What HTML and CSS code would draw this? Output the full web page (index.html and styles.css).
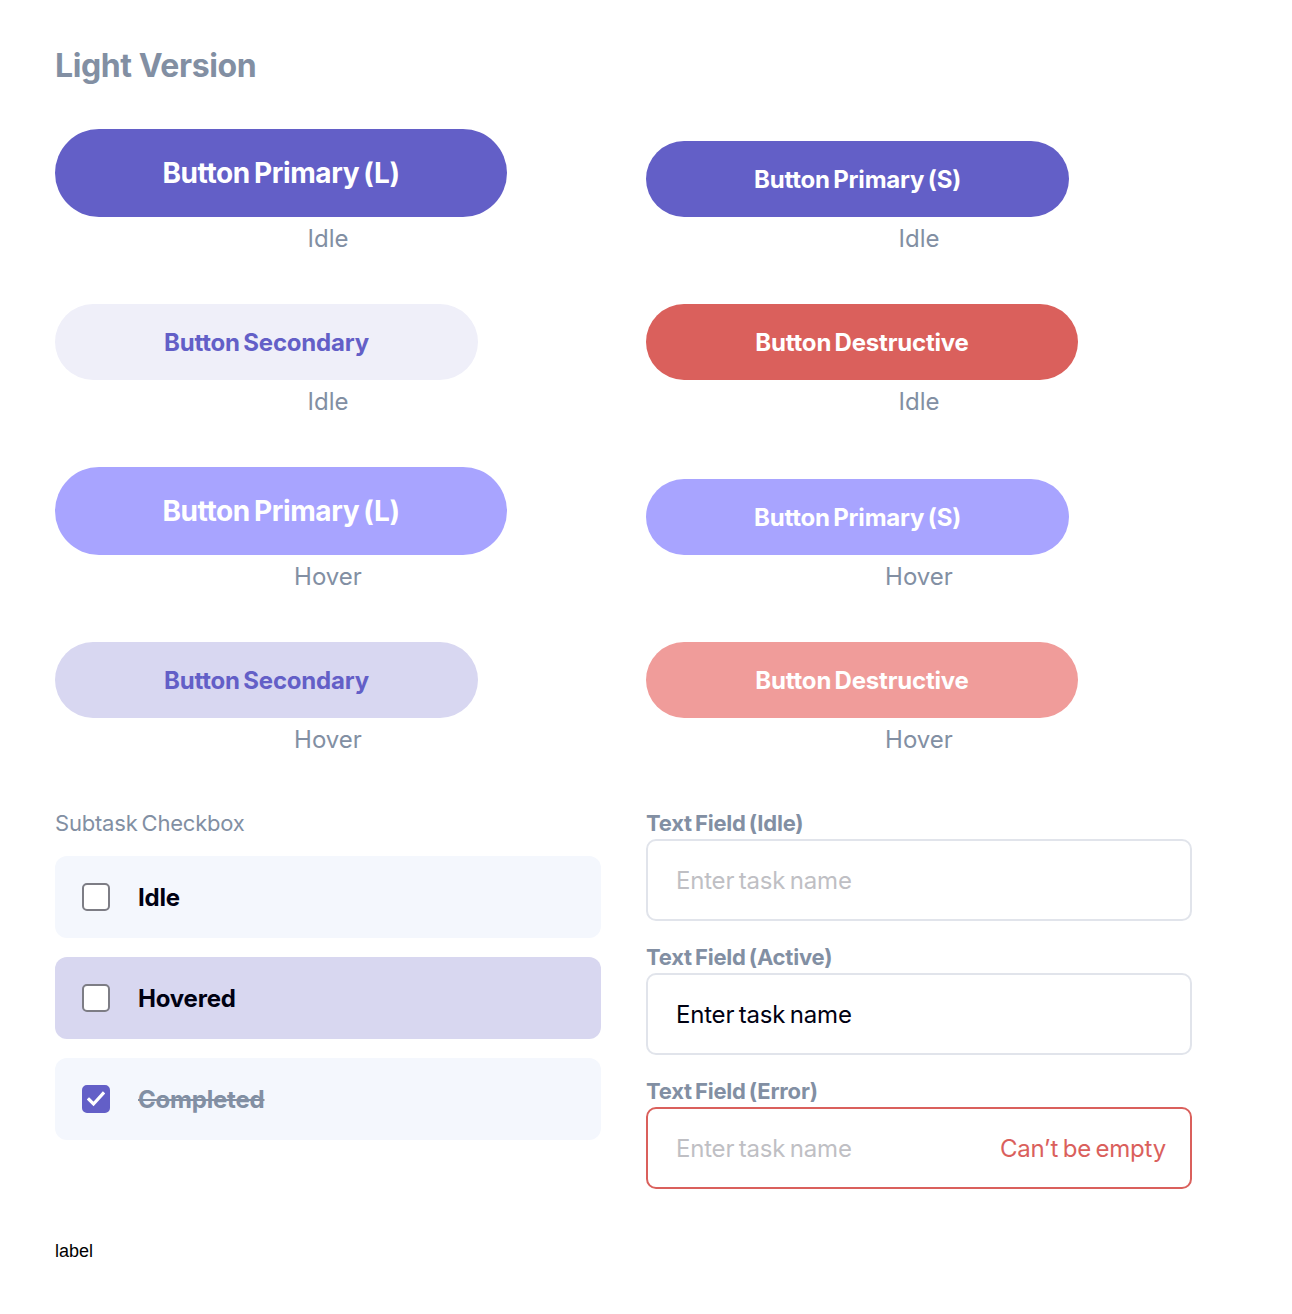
FILE: index.html
```html
<!DOCTYPE html>
<html lang="en">
<head>
<meta charset="utf-8">
<title>Light Version</title>
<link rel="stylesheet" href="styles.css">
</head>
<body>
<main class="page">
  <h1 class="title">Light Version</h1>

  <section class="btn-row">
    <div class="cell">
      <button class="btn btn-lg btn-primary">Button Primary (L)</button>
      <div class="state">Idle</div>
    </div>
    <div class="cell">
      <button class="btn btn-sm btn-primary btn-w423">Button Primary (S)</button>
      <div class="state">Idle</div>
    </div>
  </section>

  <section class="btn-row">
    <div class="cell">
      <button class="btn btn-sm btn-secondary btn-w423">Button Secondary</button>
      <div class="state">Idle</div>
    </div>
    <div class="cell">
      <button class="btn btn-sm btn-destructive btn-w432">Button Destructive</button>
      <div class="state">Idle</div>
    </div>
  </section>

  <section class="btn-row">
    <div class="cell">
      <button class="btn btn-lg btn-primary-hover">Button Primary (L)</button>
      <div class="state">Hover</div>
    </div>
    <div class="cell">
      <button class="btn btn-sm btn-primary-hover btn-w423">Button Primary (S)</button>
      <div class="state">Hover</div>
    </div>
  </section>

  <section class="btn-row">
    <div class="cell">
      <button class="btn btn-sm btn-secondary-hover btn-w423">Button Secondary</button>
      <div class="state">Hover</div>
    </div>
    <div class="cell">
      <button class="btn btn-sm btn-destructive-hover btn-w432">Button Destructive</button>
      <div class="state">Hover</div>
    </div>
  </section>

  <section class="forms">
    <div class="col">
      <div class="section-label">Subtask Checkbox</div>
      <div class="subtasks">
        <div class="subtask">
          <span class="box"></span>
          <span class="subtask-text">Idle</span>
        </div>
        <div class="subtask subtask-hover">
          <span class="box"></span>
          <span class="subtask-text">Hovered</span>
        </div>
        <div class="subtask">
          <span class="box box-checked">
            <svg width="18" height="16" viewBox="0 0 18 16"><path d="M2 8.5 L6.5 13 L16 2.5" fill="none" stroke="#fff" stroke-width="3.2" stroke-linecap="square"/></svg>
          </span>
          <span class="subtask-text subtask-done">Completed</span>
        </div>
      </div>
    </div>
    <div class="col">
      <div class="field-label">Text Field (Idle)</div>
      <div class="field"><span class="placeholder">Enter task name</span></div>
      <div class="field-label">Text Field (Active)</div>
      <div class="field"><span class="value">Enter task name</span></div>
      <div class="field-label">Text Field (Error)</div>
      <div class="field field-error"><span class="placeholder">Enter task name</span><span class="error-msg">Can’t be empty</span></div>
    </div>
  </section>

  <div class="stray-label">label</div>
</main>
</body>
</html>
```

FILE: styles.css
```css
* { box-sizing: border-box; }
html, body { margin: 0; padding: 0; background: #ffffff; }
body {
  font-family: "Inter", "Noto Sans", sans-serif;
  color: #000112;
}
.page {
  padding: 46px 55px 0 55px;
  width: 1292px;
}
.title {
  margin: 0 0 43px 0;
  font-size: 32px;
  line-height: 40px;
  font-weight: 700;
  color: #828FA3;
  letter-spacing: -0.4px;
}
.btn-row {
  display: grid;
  grid-template-columns: 546px 546px;
  column-gap: 45px;
  align-items: end;
  margin-bottom: 52px;
}
.cell {
  display: flex;
  flex-direction: column;
  align-items: flex-start;
}
.btn {
  border: none;
  border-radius: 999px;
  font-family: inherit;
  font-weight: 700;
  color: #ffffff;
  display: flex;
  align-items: center;
  justify-content: center;
  padding: 0;
  letter-spacing: -0.2px;
  word-spacing: -2px;
}
.btn-lg { width: 452px; height: 88px; font-size: 28px; letter-spacing: -0.4px; }
.btn-sm { height: 76px; font-size: 24px; }
.btn-w423 { width: 423px; }
.btn-w432 { width: 432px; }
.btn-primary { background: #635FC7; }
.btn-primary-hover { background: #A8A4FF; }
.btn-secondary { background: #EFEFF9; color: #635FC7; }
.btn-secondary-hover { background: #D8D7F1; color: #635FC7; }
.btn-destructive { background: #DA605C; }
.btn-destructive-hover { background: #F09C9A; }
.state {
  align-self: stretch;
  text-align: center;
  margin-top: 9px;
  font-size: 24px;
  line-height: 26px;
  color: #828FA3;
  font-weight: 400;
}
.forms {
  display: grid;
  grid-template-columns: 546px 546px;
  column-gap: 45px;
  padding-top: 5px;
}
.section-label {
  font-size: 22px;
  line-height: 26px;
  color: #828FA3;
  font-weight: 400;
  margin-bottom: 20px;
  letter-spacing: -0.2px;
  word-spacing: -2px;
}
.subtasks {
  display: flex;
  flex-direction: column;
  gap: 19px;
}
.subtask {
  height: 82px;
  border-radius: 12px;
  background: #F4F7FD;
  display: flex;
  align-items: center;
  padding-left: 27px;
  gap: 28px;
}
.subtask-hover { background: #D8D7F0; }
.box {
  width: 28px;
  height: 28px;
  border: 2px solid #7D7D85;
  border-radius: 5px;
  background: #ffffff;
  display: flex;
  align-items: center;
  justify-content: center;
  flex: none;
}
.box-checked {
  background: #635FC7;
  border-color: #635FC7;
}
.subtask-text {
  font-size: 24px;
  font-weight: 700;
  color: #000112;
  letter-spacing: -0.2px;
}
.subtask-done {
  color: #828FA3;
  text-decoration: line-through;
  text-decoration-thickness: 2px;
}
.field-label {
  font-size: 22px;
  line-height: 26px;
  font-weight: 700;
  color: #828FA3;
  margin-bottom: 3px;
  letter-spacing: -0.2px;
  word-spacing: -2px;
}
.field {
  height: 82px;
  border: 2px solid #E1E4EB;
  border-radius: 10px;
  display: flex;
  align-items: center;
  justify-content: space-between;
  padding: 0 24px 0 28px;
  margin-bottom: 23px;
  font-size: 24px;
  letter-spacing: -0.2px;
  word-spacing: -2px;
}
.field:last-child { margin-bottom: 0; }
.placeholder { color: #BFBFC4; }
.value { color: #000112; }
.field-error { border-color: #DA605C; }
.error-msg { color: #DA605C; }
.stray-label {
  margin-top: 51px;
  font-family: "Liberation Sans", Arial, sans-serif;
  font-size: 18px;
  line-height: 22px;
  color: #000000;
}
```
